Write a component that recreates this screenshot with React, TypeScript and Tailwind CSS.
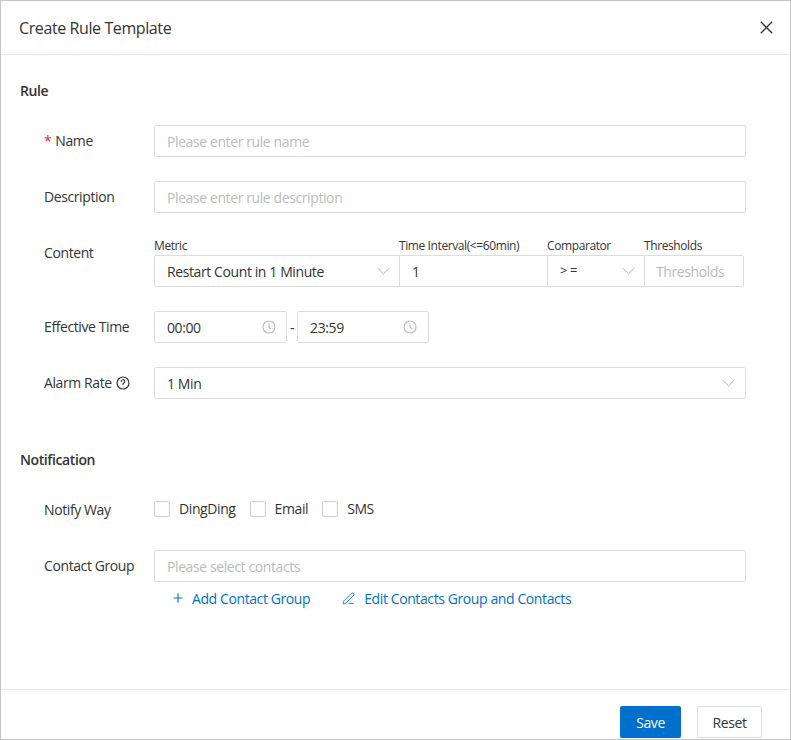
import { Plus, PenLine } from 'lucide-react'

function Chevron() {
  return (
    <svg width="13" height="8" viewBox="0 0 13 8" fill="none" stroke="#b0b0b0" strokeWidth="1">
      <path d="M0.8 1.2L6.5 6.8L12.2 1.2" />
    </svg>
  )
}

function CloseIcon() {
  return (
    <svg width="13" height="13" viewBox="0 0 13 13" fill="none" stroke="#333333" strokeWidth="1.3">
      <path d="M0.8 0.8L12.2 12.2M12.2 0.8L0.8 12.2" />
    </svg>
  )
}

function Clock() {
  return (
    <svg width="14" height="14" viewBox="0 0 14 14" fill="none" stroke="#bbbbbb" strokeWidth="1.1">
      <circle cx="7" cy="7" r="6" />
      <path d="M7 3.6V7.2L9.2 9" />
    </svg>
  )
}

function HelpIcon() {
  return (
    <svg width="14" height="14" viewBox="0 0 14 14" fill="none" stroke="#333333" strokeWidth="1.2">
      <circle cx="7" cy="7" r="6" />
      <path d="M5.3 5.5a1.75 1.75 0 1 1 2.4 1.6c-.5.25-.7.55-.7 1.1v.3" strokeLinecap="round" />
      <circle cx="7" cy="10.2" r="0.45" fill="#333333" stroke="none" />
    </svg>
  )
}

function Label({ children, required }: { children: React.ReactNode; required?: boolean }) {
  return (
    <div className="w-[110px] shrink-0 h-8 leading-8 text-[14px] text-[#333] flex items-center">
      {required && <span className="text-[#f5222d] mr-[4px]">*</span>}
      {children}
    </div>
  )
}

function TextInput({ placeholder, value }: { placeholder?: string; value?: string }) {
  return (
    <div className="flex-1 h-8 shrink-0 border border-[#dcdcdc] rounded-[2px] px-[12px] flex items-center text-[14px]">
      {value ? <span className="text-[#333]">{value}</span> : <span className="text-[#bbb]">{placeholder}</span>}
    </div>
  )
}

function Checkbox({ label }: { label: string }) {
  return (
    <div className="flex items-center mr-[14px]">
      <span className="w-4 h-4 border border-[#cccccc] rounded-[2px] bg-white" />
      <span className="ml-[9px] text-[14px] text-[#333]">{label}</span>
    </div>
  )
}

export default function App() {
  return (
    <div
      className="w-[791px] h-[740px] bg-white border border-[#c4c4c4] flex flex-col overflow-hidden tracking-[-0.4px]"
      style={{ fontFamily: '"Open Sans", "Noto Sans", sans-serif' }}
    >
      {/* Header */}
      <div className="h-[54px] shrink-0 border-b border-[#e8e8e8] flex items-center justify-between pl-[18px] pr-[17px]">
        <h1 className="text-[16px] text-[#333]">Create Rule Template</h1>
        <CloseIcon />
      </div>

      {/* Body */}
      <div className="flex-1 pl-[19px] pr-[44px] pt-[26px]">
        <div className="text-[14px] leading-5 font-semibold text-[#333]">Rule</div>

        <div className="pl-[24px] mt-[24px] flex flex-col gap-[24px]">
          <div className="flex">
            <Label required>Name</Label>
            <TextInput placeholder="Please enter rule name" />
          </div>

          <div className="flex">
            <Label>Description</Label>
            <TextInput placeholder="Please enter rule description" />
          </div>

          <div className="flex">
            <Label>Content</Label>
            <div className="flex flex-col">
              <div className="flex h-[18px] items-center text-[12px] text-[#333]">
                <span className="w-[245px]">Metric</span>
                <span className="w-[148px]">Time Interval(&lt;=60min)</span>
                <span className="w-[97px]">Comparator</span>
                <span>Thresholds</span>
              </div>
              <div className="flex h-8 text-[14px] text-[#333]">
                <div className="w-[246px] border border-[#dcdcdc] rounded-l-[2px] pl-[12px] pr-[9px] flex items-center justify-between">
                  <span>Restart Count in 1 Minute</span>
                  <Chevron />
                </div>
                <div className="w-[149px] -ml-px border border-[#dcdcdc] pl-[12px] flex items-center">1</div>
                <div className="w-[98px] -ml-px border border-[#dcdcdc] pl-[12px] pr-[9px] flex items-center justify-between">
                  <span className="text-[13px]">&gt; =</span>
                  <Chevron />
                </div>
                <div className="w-[100px] -ml-px border border-[#dcdcdc] rounded-r-[2px] pl-[11px] flex items-center text-[#bbb]">
                  Thresholds
                </div>
              </div>
            </div>
          </div>

          <div className="flex items-center">
            <Label>Effective Time</Label>
            <div className="w-[133px] h-8 border border-[#dcdcdc] rounded-[2px] pl-[12px] pr-[10px] flex items-center justify-between text-[14px] text-[#333]">
              <span>00:00</span>
              <Clock />
            </div>
            <span className="mx-[3px] text-[14px] text-[#333]">-</span>
            <div className="w-[132px] h-8 border border-[#dcdcdc] rounded-[2px] pl-[12px] pr-[11px] flex items-center justify-between text-[14px] text-[#333]">
              <span>23:59</span>
              <Clock />
            </div>
          </div>

          <div className="flex">
            <Label>
              <span className="mr-[4px]">Alarm Rate</span>
              <HelpIcon />
            </Label>
            <div className="flex-1 h-8 border border-[#dcdcdc] rounded-[2px] pl-[12px] pr-[10px] flex items-center justify-between text-[14px] text-[#333]">
              <span>1 Min</span>
              <Chevron />
            </div>
          </div>
        </div>

        <div className="mt-[51px] text-[14px] leading-5 font-semibold text-[#333]">Notification</div>

        <div className="pl-[24px] mt-[24px] flex flex-col gap-[24px]">
          <div className="flex items-center">
            <Label>Notify Way</Label>
            <div className="flex items-center -mt-[3px]">
              <Checkbox label="DingDing" />
              <Checkbox label="Email" />
              <Checkbox label="SMS" />
            </div>
          </div>

          <div className="flex">
            <Label>Contact Group</Label>
            <div className="flex-1 flex flex-col">
              <div className="h-8 border border-[#dcdcdc] rounded-[2px] px-[12px] flex items-center text-[14px] text-[#bbb]">
                Please select contacts
              </div>
              <div className="mt-[6px] h-5 flex items-center pl-[17px] text-[14px] text-[#0070cc]">
                <Plus className="w-[14px] h-[14px]" strokeWidth={2} />
                <span className="ml-[7px]">Add Contact Group</span>
                <PenLine className="ml-[32px] w-[13px] h-[13px]" strokeWidth={1.6} />
                <span className="ml-[9px]">Edit Contacts Group and Contacts</span>
              </div>
            </div>
          </div>
        </div>
      </div>

      {/* Footer */}
      <div className="h-[50px] shrink-0 border-t border-[#e8e8e8] flex justify-end items-start pt-[16px] pr-[28px] gap-[16px]">
        <button className="w-[61px] h-[32px] bg-[#0070cc] text-white text-[14px] rounded-[2px]">Save</button>
        <button className="w-[65px] h-[32px] border border-[#dcdcdc] text-[#333] text-[14px] rounded-[2px] bg-white">
          Reset
        </button>
      </div>
    </div>
  )
}
